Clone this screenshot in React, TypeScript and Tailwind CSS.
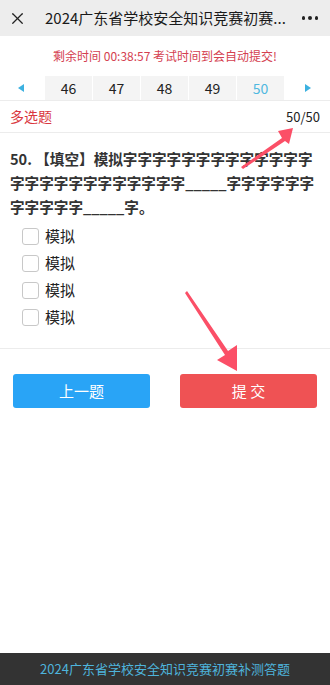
import { X } from "lucide-react";

const font = { fontFamily: '"Noto Sans CJK SC", "Noto Sans", sans-serif' };

const pages = [46, 47, 48, 49, 50];
const options = ["模拟", "模拟", "模拟", "模拟"];

function Arrows() {
  return (
    <svg
      className="absolute inset-0 pointer-events-none"
      width="330"
      height="685"
      viewBox="0 0 330 685"
    >
      {/* arrow to 50/50 */}
      <polygon
        points="241,167 282,138 278,131 293,128 289,144 285,141 243,169"
        fill="#fb4f67"
      />
      {/* arrow to submit */}
      <polygon
        points="187,291 228,351 237,345 237,371 217,360 225,355 185,293"
        fill="#fb4f67"
      />
    </svg>
  );
}

export default function App() {
  return (
    <div className="relative min-h-[685px] w-[330px] flex flex-col bg-white" style={font}>
      {/* Top bar */}
      <div className="h-9 bg-[#ededed] flex items-center pl-[8px] pr-[12px]">
        <X size={19} strokeWidth={1.6} className="text-[#222]" />
        <div className="ml-[18px] flex-1 text-[15px] text-[#1a1a1a] truncate">2024广东省学校安全知识竞赛初赛...</div>
        <div className="flex gap-[3px] ml-2">
          <span className="w-[3.5px] h-[3.5px] rounded-full bg-[#222]" />
          <span className="w-[3.5px] h-[3.5px] rounded-full bg-[#222]" />
          <span className="w-[3.5px] h-[3.5px] rounded-full bg-[#222]" />
        </div>
      </div>

      {/* Timer */}
      <div className="pt-[11px] text-center text-[12px] text-[#d4404f] leading-[18px]">
        剩余时间 00:38:57 考试时间到会自动提交!
      </div>

      {/* Pagination */}
      <div className="mt-[11px] flex items-center h-6">
        <div className="w-[45px] flex justify-center">
          <span className="w-0 h-0 border-y-[4px] border-y-transparent border-r-[6px] border-r-[#3cb1e0] -ml-[3px]" />
        </div>
        <div className="flex gap-px">
          {pages.map((p) => (
            <div
              key={p}
              className={`w-[47px] h-6 bg-[#f4f4f4] flex items-center justify-center text-[14px] ${
                p === 50 ? "text-[#4fb8e0]" : "text-[#222]"
              }`}
            >
              {p}
            </div>
          ))}
        </div>
        <div className="flex-1 flex justify-center">
          <span className="w-0 h-0 border-y-[4px] border-y-transparent border-l-[6px] border-l-[#3cb1e0] ml-[2px]" />
        </div>
      </div>
      <div className="h-px bg-[#ececec]" />

      {/* Type row */}
      <div className="h-[32px] flex items-center justify-between px-[10px] border-b border-[#ececec]">
        <span className="text-[14px] text-[#d9363e]">多选题</span>
        <span className="text-[13px] text-[#222]">50/50</span>
      </div>

      {/* Question */}
      <div className="px-[10px] pt-[14px] text-[14.6px] leading-[24px] font-bold text-[#333] whitespace-nowrap">
        50. 【填空】模拟字字字字字字字字字字字字字
        <br />
        字字字字字字字字字字字字_____字字字字字字
        <br />
        字字字字字_____字。
      </div>

      <div className="pl-[22px] pt-[8px] pb-[22px] flex flex-col gap-[9px]">
        {options.map((o, i) => (
          <label key={i} className="flex items-center gap-[6px] h-[18px]">
            <span className="w-[17px] h-[17px] rounded-[3px] border border-[#c8c8c8] bg-white" />
            <span className="text-[15px] text-[#222]">{o}</span>
          </label>
        ))}
      </div>
      <div className="h-px bg-[#ececec]" />

      {/* Buttons */}
      <div className="flex justify-between px-[13px] pt-[25px]">
        <button className="w-[137px] h-[34px] rounded-[3px] bg-[#29a4f6] text-white text-[15px]">上一题</button>
        <button className="w-[137px] h-[34px] rounded-[3px] bg-[#ef5254] text-white text-[15px]">提 交</button>
      </div>

      {/* Footer */}
      <div className="mt-auto h-[32px] bg-[#333333] flex items-center justify-center text-[13px] text-[#4eb4dc]">
        2024广东省学校安全知识竞赛初赛补测答题
      </div>

      <Arrows />
    </div>
  );
}
